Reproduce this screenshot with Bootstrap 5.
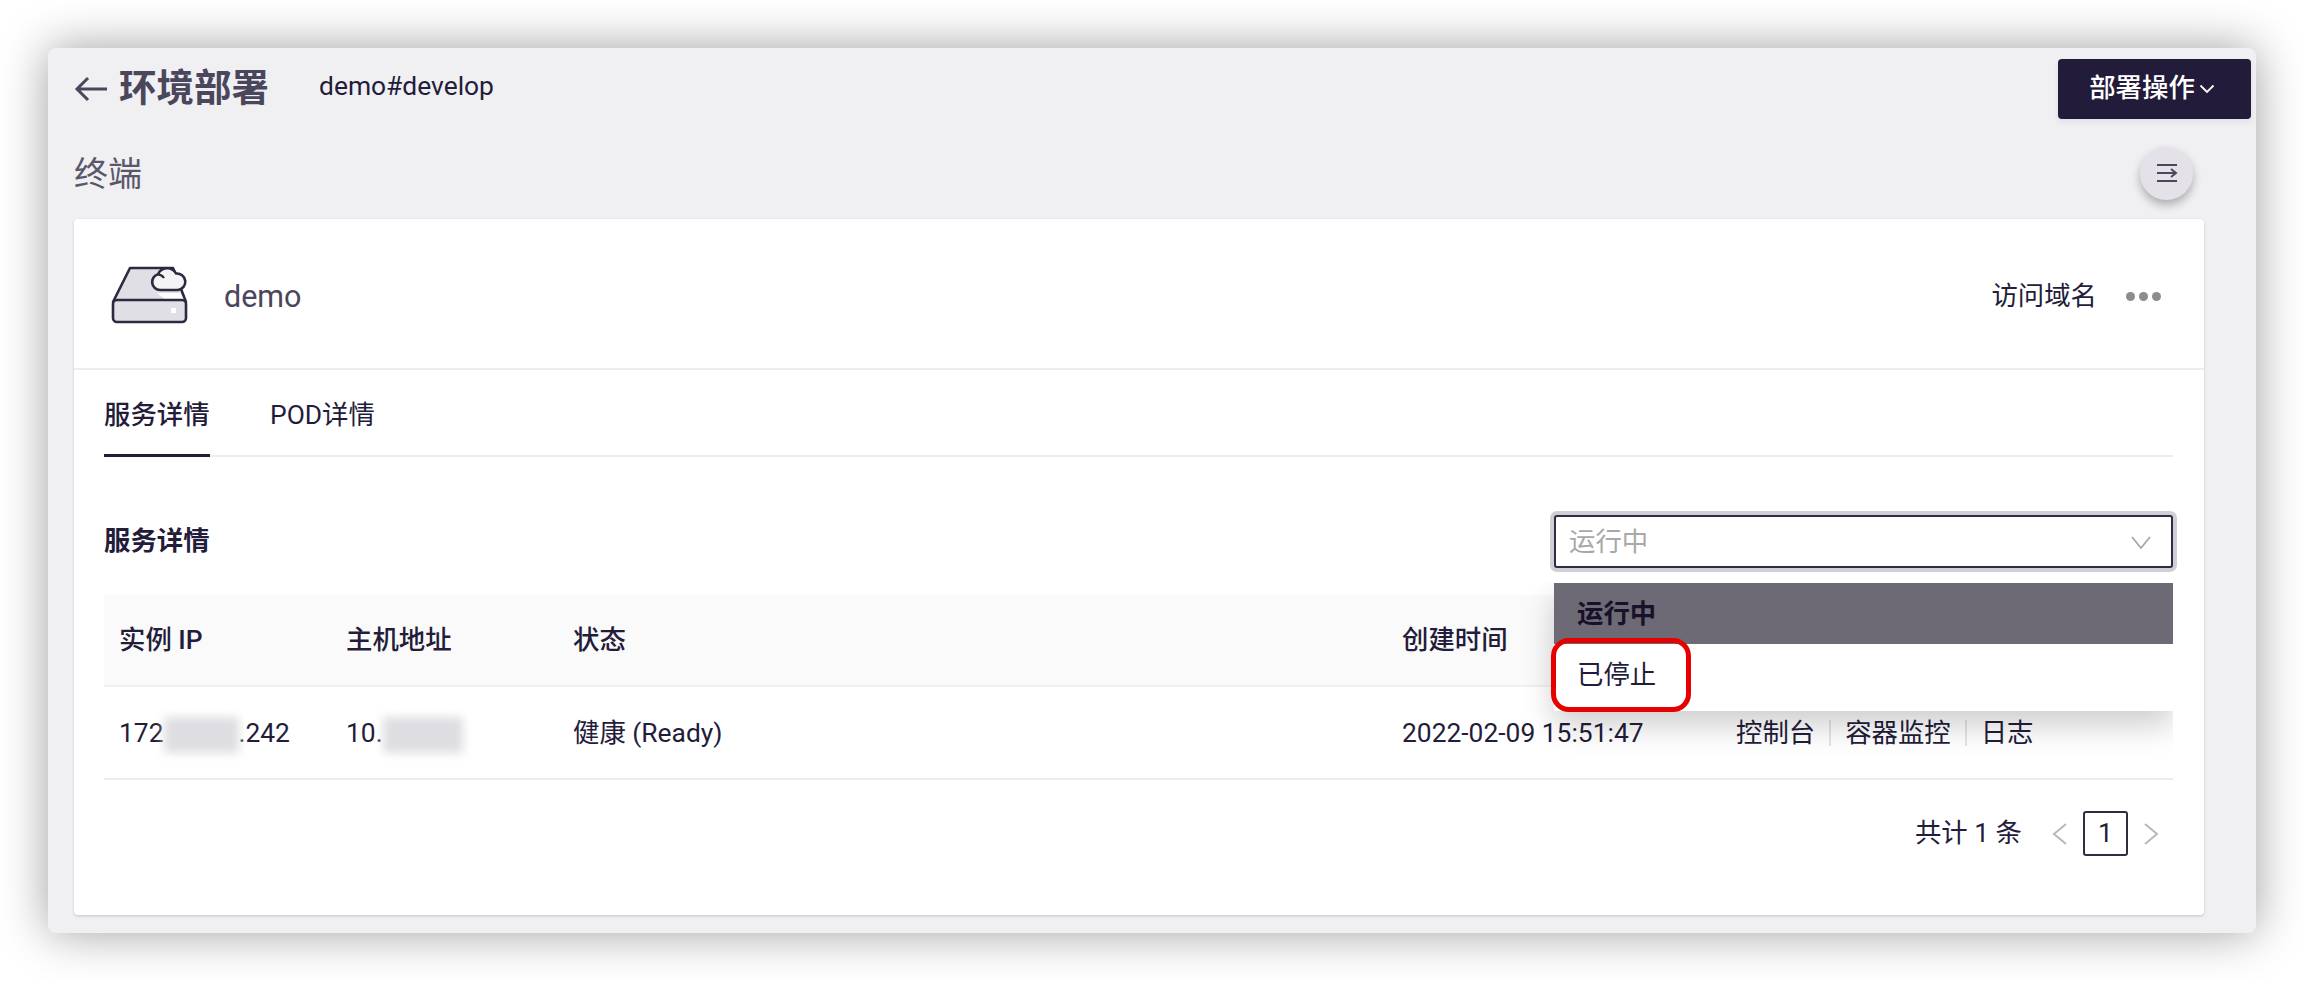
<!DOCTYPE html>
<html lang="zh-CN">
<head>
<meta charset="UTF-8">
<title>环境部署</title>
<link rel="stylesheet" href="https://cdn.jsdelivr.net/npm/bootstrap@5.3.3/dist/css/bootstrap.min.css">
<style>
html, body { height: 100%; overflow: hidden; }
body {
    background: #fff;
    padding: 48px 48px 48px 48px;
    font-family: Roboto, "Noto Sans CJK SC", sans-serif;
    color: #231c3a;
    font-size: 26.4px;
}
.app-window {
    height: 885px;
    background: #f0f0f3;
    border-radius: 8px;
    box-shadow: 0 0 48px rgba(0,0,0,.38);
    padding: 11px 5px 18px 26px;
}
.top-bar { height: 60px; }
.page-title { font-size: 37.5px; font-weight: 700; color: #4a465c; margin: 0 0 0 11px; line-height: 1; }
.branch-name { font-size: 26.4px; margin-left: 50px; margin-top: -4px; }
.deploy-btn {
    width: 193px; height: 60px; background: #231b3a; color: #fff;
    border: 0; border-radius: 4px; font-size: 26.4px; font-weight: 500;
    box-shadow: 0 3px 6px rgba(35,27,58,.08); padding: 0 5px 0 0;
}
.deploy-btn:hover, .deploy-btn:focus { background: #231b3a; color: #fff; }
.term-row { height: 54px; margin-top: 27px; margin-right: 58px; }
.term-title { font-size: 34px; color: #5a576b; line-height: 1; margin-top: 2px; }
.round-btn {
    width: 53px; height: 53px; background: #e4e2e8; border-radius: 50%;
    box-shadow: 0 5px 10px rgba(0,0,0,.28);
}
.main-card {
    margin-top: 19px; margin-right: 47px; height: 696px;
    border: 0; border-radius: 4px; box-shadow: 0 1px 3px rgba(0,0,0,.18);
}
.main-card .card-header {
    height: 151px; background: #fff; border-bottom: 2px solid #ececef;
    padding: 6px 40px 0 36px;
}
.host-icon { margin-top: -4px; }
.host-name { font-size: 30.5px; color: #4a465c; margin-left: 34px; }
.domain-link { font-size: 26.4px; color: #231c3a; }
.dot-row { margin-left: 29px; margin-right: 3px; }
.dot-row i { display: block; width: 9px; height: 9px; border-radius: 50%; background: #8c8c8c; }
.main-card .card-body { padding: 0 31px 0 30px; }
.tab-row { height: 87px; border-bottom: 2px solid #ececef; }
.tab-row .nav-link {
    color: #231c3a; padding: 0; height: 87px; line-height: 90px; margin-right: 60px;
    font-size: 26.4px; border-bottom: 3px solid transparent;
}
.tab-row .nav-link.active { border-bottom-color: #231b3a; font-weight: 500; width: 106px; }
.section-row { margin-top: 58px; }
.section-title { font-size: 26.4px; font-weight: 700; margin-top: 1px; }
.fake-select {
    width: 619px; height: 53px; background: #fff; border: 2px solid #302c44; border-radius: 3px;
    box-shadow: 0 0 0 4px #cfcfd6; padding: 2px 20px 0 13px; color: #a8a8a8; font-size: 26.4px;
}
.select-menu {
    top: 68px; right: 0; width: 619px; z-index: 5; background: #fff;
    box-shadow: 0 14px 30px rgba(0,0,0,.2); font-size: 26.4px;
    clip-path: inset(0 0 -70px -40px);
}
.select-menu div { padding-left: 23px; }
.menu-on { height: 61px; line-height: 62px; background: #6e6a75; font-weight: 700; color: #17122a; }
.menu-off { height: 67px; line-height: 63px; color: #231c3a; }
.red-box {
    left: -3px; top: 55px; width: 140px; height: 74px;
    border: 5px solid #e60000; border-radius: 18px;
}
.pod-table { margin: 27px 0 0; table-layout: fixed; width: 2069px; font-size: 26.4px; color: #231c3a; }
.pod-table th {
    height: 91px; background: #fafafa; font-weight: 500; vertical-align: middle;
    border-bottom: 2px solid #f0f0f0; padding: 2px 15px 0;
}
.pod-table td {
    height: 93px; vertical-align: middle; border-bottom: 2px solid #ececef; padding: 2px 15px 0;
}
.col-ip, .col-host { width: 227px; }
.col-state { width: 829px; }
.col-time { width: 334px; }
.mask-blur {
    display: inline-block; height: 36px; vertical-align: middle; background: #dedee2;
    filter: blur(5px);
}
.mask-ip { width: 75px; }
.mask-host { width: 80px; }
.op-sep { width: 2px; height: 26px; background: #e4e4e8; margin: 0 14px; }
.pager-row { margin-top: 31px; font-size: 26.4px; }
.pager-total { margin-right: 30px; }
.pager-next { margin-right: 14px; }
.page-box {
    width: 45px; height: 45px; border: 2px solid #302c44; border-radius: 3px;
    margin: 0 16px; font-size: 26.4px;
}
</style>
</head>
<body>
<div class="app-window d-flex flex-column">
    <div class="top-bar d-flex align-items-center justify-content-between flex-shrink-0">
        <div class="d-flex align-items-center">
            <svg width="34" height="28" viewBox="0 0 34 28" fill="none" stroke="#4a465c" stroke-width="3"><path d="M33 14H3M14 3L3 14l11 11"/></svg>
            <h1 class="page-title">环境部署</h1>
            <span class="branch-name">demo#develop</span>
        </div>
        <button type="button" class="btn deploy-btn d-flex align-items-center justify-content-center">部署操作<svg class="ms-1" width="16" height="10" viewBox="0 0 16 10" fill="none" stroke="#fff" stroke-width="1.8"><path d="M1.5 1.5L8 8l6.5-6.5"/></svg></button>
    </div>

    <div class="term-row d-flex align-items-center justify-content-between flex-shrink-0">
        <span class="term-title">终端</span>
        <div class="round-btn d-flex align-items-center justify-content-center">
            <svg width="22" height="20" viewBox="0 0 22 20" fill="none" stroke="#4a465c" stroke-width="2"><path d="M1 2h20M1 10h19M15 6l5 4-5 4M1 18h20"/></svg>
        </div>
    </div>

    <div class="card main-card flex-shrink-0">
        <div class="card-header d-flex align-items-center justify-content-between">
            <div class="d-flex align-items-center">
                <svg class="host-icon" width="80" height="62" viewBox="0 0 80 62">
                    <path d="M3 38L20 4h43l13 34z" fill="#dfdfe5" stroke="#2d2a40" stroke-width="2.6" stroke-linejoin="round"/>
                    <path d="M47 29h23l4 7H56z" fill="#fff"/>
                    <rect x="3" y="36" width="73" height="22" rx="4" fill="#dfdfe5" stroke="#2d2a40" stroke-width="2.6"/>
                    <rect x="61" y="44" width="5" height="5" fill="#fff"/>
                    <path d="M50 26a8 8 0 0 1-2-15.7A10 10 0 0 1 66 9.5 8.3 8.3 0 0 1 68 26z" fill="#f4f4f7" stroke="#2d2a40" stroke-width="2.6" stroke-linejoin="round"/>
                    <path d="M48 10.3a8 8 0 0 1 6 3.7" fill="none" stroke="#2d2a40" stroke-width="2.2"/>
                </svg>
                <span class="host-name">demo</span>
            </div>
            <div class="d-flex align-items-center">
                <span class="domain-link">访问域名</span>
                <span class="dot-row d-flex gap-1"><i></i><i></i><i></i></span>
            </div>
        </div>
        <div class="card-body">
            <ul class="nav tab-row">
                <li class="nav-item"><a class="nav-link active" href="#">服务详情</a></li>
                <li class="nav-item"><a class="nav-link" href="#">POD详情</a></li>
            </ul>

            <div class="section-row d-flex align-items-center justify-content-between">
                <span class="section-title">服务详情</span>
                <div class="position-relative">
                    <div class="fake-select d-flex align-items-center justify-content-between">
                        <span>运行中</span>
                        <svg width="20" height="13" viewBox="0 0 20 13" fill="none" stroke="#a8a8a8" stroke-width="1.8"><path d="M1 1l9 11 9-11"/></svg>
                    </div>
                    <div class="select-menu position-absolute">
                        <div class="menu-on">运行中</div>
                        <div class="menu-off">已停止</div>
                        <span class="red-box position-absolute"></span>
                    </div>
                </div>
            </div>

            <table class="table pod-table">
                <colgroup><col class="col-ip"><col class="col-host"><col class="col-state"><col class="col-time"><col></colgroup>
                <thead>
                    <tr><th>实例 IP</th><th>主机地址</th><th>状态</th><th>创建时间</th><th>操作</th></tr>
                </thead>
                <tbody>
                    <tr>
                        <td>172<span class="mask-blur mask-ip"></span>.242</td>
                        <td>10.<span class="mask-blur mask-host"></span></td>
                        <td>健康 (Ready)</td>
                        <td>2022-02-09 15:51:47</td>
                        <td>
                            <div class="d-flex align-items-center">
                                <span>控制台</span><span class="op-sep"></span><span>容器监控</span><span class="op-sep"></span><span>日志</span>
                            </div>
                        </td>
                    </tr>
                </tbody>
            </table>

            <div class="pager-row d-flex align-items-center justify-content-end">
                <span class="pager-total">共计 1 条</span>
                <svg width="15" height="22" viewBox="0 0 15 22" fill="none" stroke="#b8b8b8" stroke-width="2"><path d="M14 1L2 11l12 10"/></svg>
                <span class="page-box d-flex align-items-center justify-content-center">1</span>
                <svg class="pager-next" width="15" height="22" viewBox="0 0 15 22" fill="none" stroke="#b8b8b8" stroke-width="2"><path d="M1 1l12 10L1 21"/></svg>
            </div>
        </div>
    </div>
</div>
<script src="https://cdn.jsdelivr.net/npm/bootstrap@5.3.3/dist/js/bootstrap.bundle.min.js"></script>
</body>
</html>
